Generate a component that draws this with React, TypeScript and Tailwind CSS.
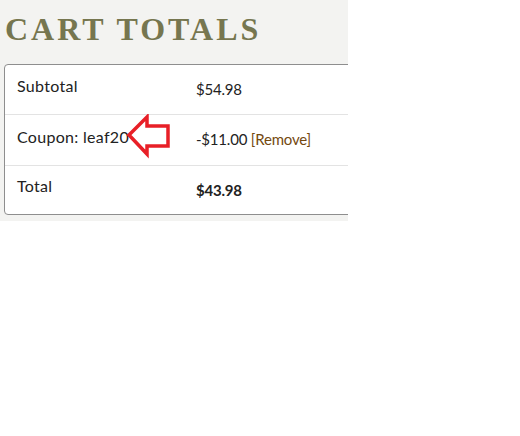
import React from "react";

export default function App() {
  return (
    <div className="w-[520px] h-[436px] bg-white">
      <div className="w-[348px] h-[221px] bg-[#f3f3f1] overflow-hidden pl-[4px] pt-[11px]">
        <h2
          className="text-[32px] leading-[36px] font-bold tracking-[3px] text-[#76764f] pl-[1px] mb-[17px]"
          style={{ fontFamily: '"Liberation Serif", serif' }}
        >
          CART TOTALS
        </h2>
        <div
          className="w-[400px] bg-white border border-[#8e8e8e] rounded-[4px] text-[16px] tracking-[0.3px] text-[#222]"
          style={{ fontFamily: '"Lato", "Noto Sans", sans-serif' }}
        >
          <div className="flex h-[50px] border-b border-[#e3e3e3]">
            <div className="w-[191px] pl-[12px] pt-[9px]">Subtotal</div>
            <div className="pt-[13px] text-[15px] tracking-[-0.2px]">$54.98</div>
          </div>
          <div className="flex h-[51px] border-b border-[#e3e3e3] relative">
            <div className="w-[191px] pl-[12px] pt-[10px]">Coupon: leaf20</div>
            <div className="pt-[13px] text-[15px] tracking-[-0.2px]">
              -$11.00 <span className="text-[#74490f]">[Remove]</span>
            </div>
            <svg
              className="absolute left-[121px] top-[-1px]"
              width="50"
              height="46"
              viewBox="0 0 50 46"
            >
              <path
                d="M3 21 L21 3 L21 12 L42 12 L42 32 L21 32 L21 40 Z"
                fill="none"
                stroke="#e81f27"
                strokeWidth="3.5"
                strokeLinejoin="miter"
              />
            </svg>
          </div>
          <div className="flex h-[48px]">
            <div className="w-[191px] pl-[12px] pt-[8px]">Total</div>
            <div className="pt-[13px] font-bold text-[15px] tracking-[-0.2px]">$43.98</div>
          </div>
        </div>
      </div>
    </div>
  );
}
